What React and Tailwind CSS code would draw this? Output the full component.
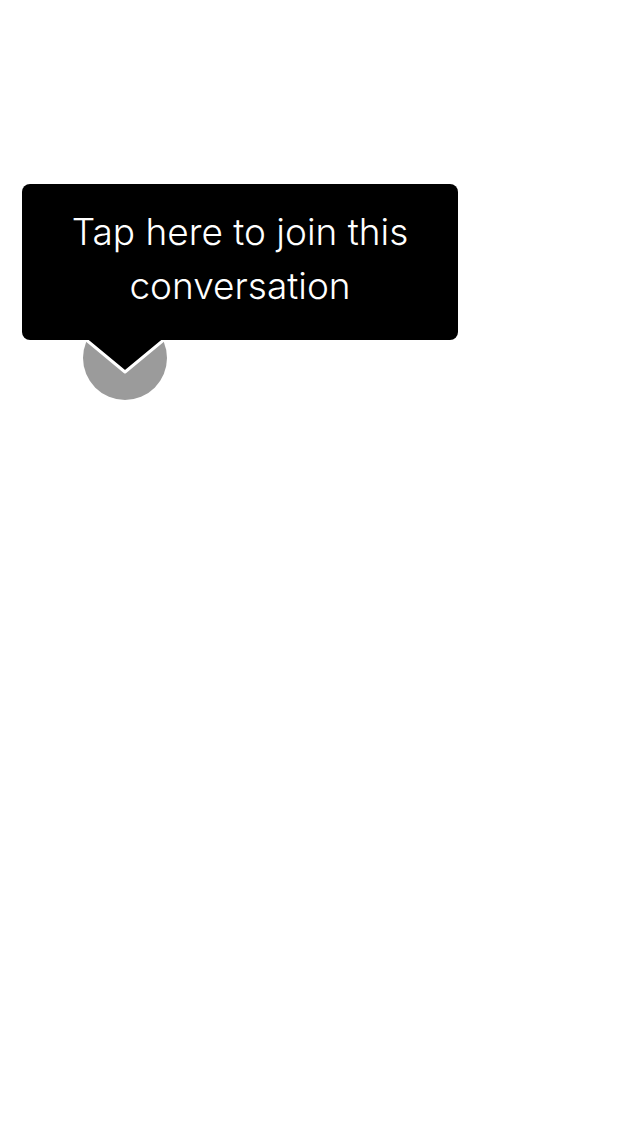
import React from 'react';

const Avatar = () => (
  <div className="w-[84px] h-[84px] rounded-full bg-[#9b9b9b]" />
);

const JoinTooltip = () => (
  <div className="absolute left-[22px] top-[184px] w-[436px]">
    <div className="h-[156px] rounded-[8px] bg-black flex items-center justify-center">
      <p
        className="text-white text-center text-[37px] leading-[54px] font-light px-6 pb-[6px]"
        style={{ fontFamily: 'Inter, "Liberation Sans", Arial, sans-serif' }}
      >
        Tap here to join this conversation
      </p>
    </div>
    <svg
      className="absolute left-[58px] top-[154px]"
      width="90"
      height="40"
      viewBox="0 0 90 40"
    >
      <path
        d="M4 0 L45 34 L86 0"
        fill="#000"
        stroke="#fff"
        strokeWidth="3"
        strokeLinejoin="round"
      />
      <rect x="0" y="0" width="90" height="2" fill="#000" />
    </svg>
  </div>
);

export default function App() {
  return (
    <div
      className="relative w-[640px] h-[1136px] bg-white overflow-hidden"
      style={{ fontFamily: '"Liberation Sans", Arial, sans-serif' }}
    >
      <div className="pt-[316px] pl-[83px]">
        <Avatar />
      </div>
      <JoinTooltip />
    </div>
  );
}
